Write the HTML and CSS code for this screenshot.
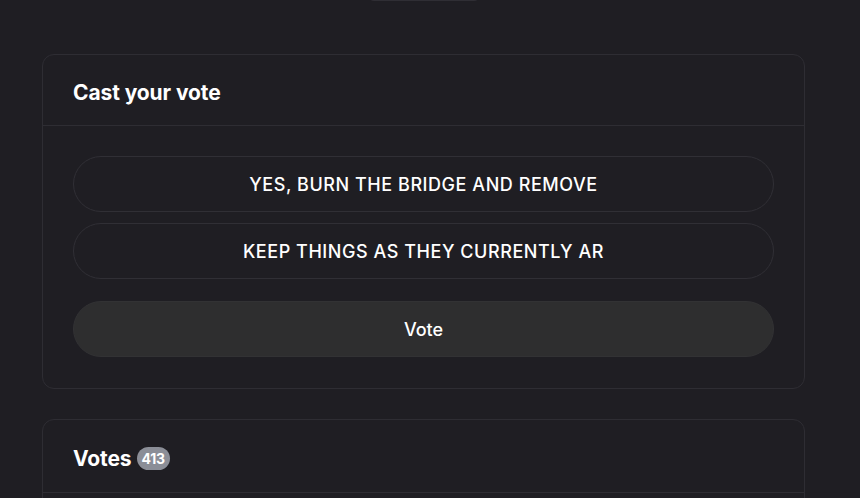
FILE: index.html
```html
<!DOCTYPE html>
<html lang="en">
<head>
<meta charset="utf-8">
<title>Vote</title>
<link rel="stylesheet" href="styles.css">
</head>
<body>
<div class="page">
  <div class="top-tab"></div>
  <section class="card">
    <header class="card-header">
      <h2 class="card-title">Cast your vote</h2>
    </header>
    <div class="card-body">
      <div class="options">
        <button class="option">YES, BURN THE BRIDGE AND REMOVE</button>
        <button class="option">KEEP THINGS AS THEY CURRENTLY AR</button>
      </div>
      <button class="vote-btn">Vote</button>
    </div>
  </section>
  <section class="card">
    <header class="card-header card-header--votes">
      <h2 class="card-title">Votes <span class="badge">413</span></h2>
    </header>
    <div class="card-body"></div>
  </section>
</div>
</body>
</html>
```
FILE: styles.css
```css
* { box-sizing: border-box; }
html, body { margin: 0; padding: 0; }
body {
  background: #1f1e23;
  color: #ffffff;
  font-family: Inter, "Noto Sans", sans-serif;
  height: 498px;
  overflow: hidden;
}
.page {
  width: 763px;
  margin-left: 42px;
  display: flex;
  flex-direction: column;
  gap: 30px;
  position: relative;
  padding-top: 54px;
}
.top-tab {
  position: absolute;
  top: -20px;
  left: 326px;
  width: 112px;
  height: 21px;
  border-bottom: 1px solid #2f2e34;
  border-radius: 0 0 6px 6px;
}
.card {
  border: 1px solid #2e2d33;
  border-radius: 12px;
}
.card-header {
  height: 71px;
  padding: 5px 30px 0;
  display: flex;
  align-items: center;
  border-bottom: 1px solid #2e2d33;
}
.card-header--votes { height: 73px; }
.card-title {
  margin: 0;
  font-size: 21px;
  font-weight: 700;
  letter-spacing: -0.1px;
  display: flex;
  align-items: center;
  gap: 5px;
}
.badge {
  display: inline-flex;
  align-items: center;
  justify-content: center;
  height: 23px;
  padding: 0 5px;
  border-radius: 12px;
  background: #8b8e97;
  color: #fff;
  font-size: 14px;
  font-weight: 700;
  letter-spacing: -0.2px;
}
.card-body {
  padding: 30px 30px 31px;
  display: flex;
  flex-direction: column;
  gap: 22px;
}
.options {
  display: flex;
  flex-direction: column;
  gap: 11px;
}
.option, .vote-btn {
  font-family: Inter, "Noto Sans", sans-serif;
  height: 56px;
  border-radius: 28px;
  color: #fff;
  font-size: 18px;
  font-weight: 500;
  cursor: pointer;
}
.option {
  background: transparent;
  border: 1px solid #302f35;
  text-transform: uppercase;
  letter-spacing: 0.55px;
}
.vote-btn {
  background: #2e2e2f;
  border: 1px solid #323234;
}
```
